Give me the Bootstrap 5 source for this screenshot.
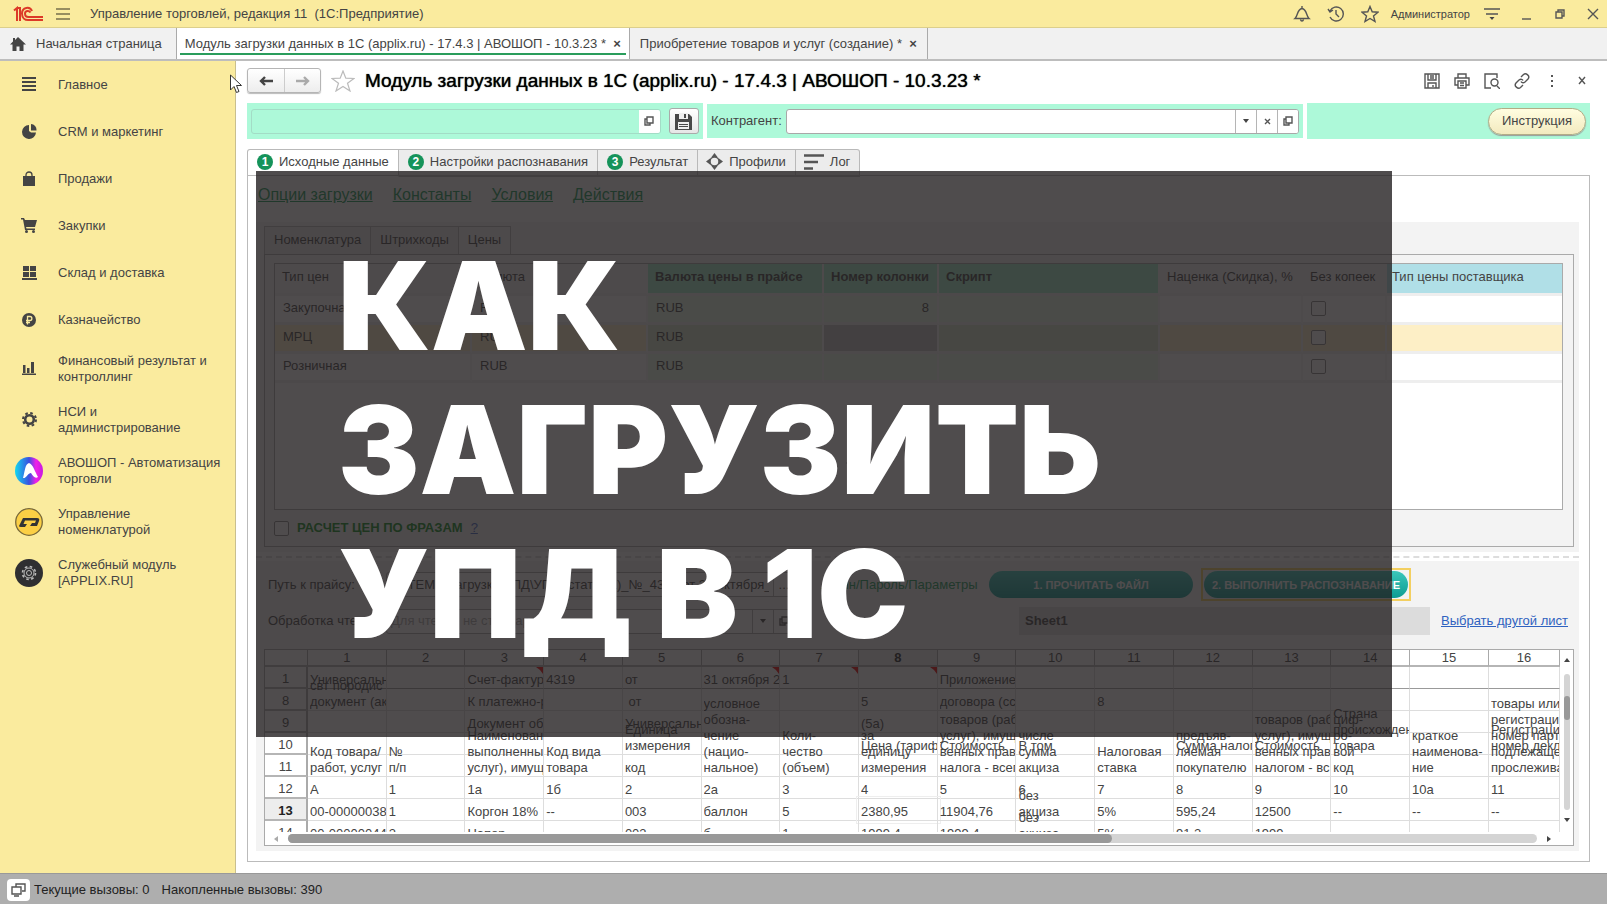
<!DOCTYPE html>
<html lang="ru">
<head>
<meta charset="utf-8">
<meta name="viewport" content="width=device-width, initial-scale=1">
<title>Управление торговлей</title>
<link href="https://cdn.jsdelivr.net/npm/bootstrap@5.3.0/dist/css/bootstrap.min.css" rel="stylesheet">
<style>
body{font:13px/16px "Liberation Sans",Arial,sans-serif;color:#444;background:#fff}
svg{display:block;flex:none}
button,input{font:inherit;color:inherit}
.ico{fill:none;stroke:#555;stroke-width:1.4}
.plain{border:0;background:none;padding:0}
.topbar{height:28px;background:#faeb9e;border-bottom:1px solid #dccf8c;padding-left:13px}
.user{font-size:11px}
.wintabs{height:33px;background:#f1f1f1;border-bottom:2px solid #bdbdbd}
.wintab{padding:0 10px;border-right:1px solid #aaa;color:#444;text-decoration:none}
.wintab.home{padding:0 14px 0 10px}
.wintab.current{background:#fff;padding:0 3px}
.wintab.current>span{border-bottom:2px solid #2a9d5c;padding:7px 5px 0;height:26px}
.side{width:236px;flex:none;background:#faeb9e;border-right:1px solid #c9bf8e}
.side a{display:flex;align-items:center;height:47px;color:#444;text-decoration:none}
.side a.two{height:51px}
.side a span{width:58px;flex:none;display:flex;justify-content:center}
.side svg{fill:#444}
.work{padding:0 17px 11px 11px;min-width:0}
.headline{padding-top:3px;margin-bottom:6px}
.navpair{height:25px;border:1px solid #b5b5b5;border-radius:3px;background:linear-gradient(#fff,#ededed);box-shadow:0 1px 1px #bbb}
.navpair button{width:36px;display:flex;align-items:center;justify-content:center}
.navpair button+button{border-left:1px solid #ccc}
.favstar{margin:0 10px}
.ttl{font-size:19px;line-height:24px;color:#000;margin:0;font-weight:400;text-shadow:0 0 1px #000}
.mint{background:#adf9d9;height:36px}
.mint.mid{height:34px}
.fld{border:1px solid #a8a8a8;border-radius:3px;background:#fff;height:25px;overflow:hidden}
.fld input{border:0;background:transparent;min-width:0;outline:0;padding:0 4px}
.fld input::placeholder{color:#aaa}
.fld button{width:21px;border:0;border-left:1px solid #b5b5b5;background:#fff;display:flex;align-items:center;justify-content:center;padding:0}
.fld.ghost{background:#adf9d9;border-color:#a3dcc6}
.savebtn{width:30px;height:26px;border:1px solid #aaa;border-radius:3px;background:linear-gradient(#fff,#e6e6e6);padding:0;display:flex;align-items:center;justify-content:center}
.help{height:27px;width:98px;border:1px solid #b3ac86;border-radius:14px;background:linear-gradient(#fffde0,#f3eabf);box-shadow:0 1px 1px #999;padding:0}
.steps{height:32px;padding-top:4px;margin:6px 0 -1px}
.steps button{height:28px;border:1px solid #b9b9b9;border-left-width:0;background:#ececec;padding:0 9px 3px;display:flex;align-items:center;gap:6px}
.steps button:first-child{border-left-width:1px;background:#fff;border-bottom-color:#fff;border-top-left-radius:3px}
.steps button:last-child{border-top-right-radius:3px}
.num{width:16px;height:16px;border-radius:8px;background:#15935a;color:#fff;font-weight:700;font-size:12px;line-height:16px;text-align:center}
.panel{border:1px solid #bbb;margin-top:-1px;padding:0 10px 10px 8px}
.opts{height:46px;padding:0 0 8px 2px;font-size:16px;gap:20px}
.opts a{color:#159a55}
.grp{background:#f3f3f3}
.subtabs button{height:28px;border:1px solid #bbb;border-left-width:0;border-bottom:0;background:#ececec;padding:0 9px 2px}
.subtabs button:first-child{border-left-width:1px}
.subtabs button:last-child{background:#f3f3f3;height:29px;margin-bottom:-1px}
.box{border:1px solid #aaa}
.prices{width:100%;table-layout:fixed;border-collapse:separate;border-spacing:0}
.prices th,.prices td{height:29px;padding:0 8px 2px;border-bottom:3px solid #eee;border-right:2px solid #f6f6f6;font-weight:400;white-space:nowrap}
.prices th{background:#f3f3f3;height:32px;padding:0 6px 3px 7px}
.prices th.g{background:#a5efcb;font-weight:700}
.prices td.g{background:#e4f8e6}
.prices tr.hot td{background:#fdefc6}
.prices tr.hot td.g{background:#d8e6ca}
.prices tr.hot td.cur{background:#c4c4c4}
.prices th.b{background:#b0dfe7;padding-left:5px}
.prices th:last-child,.prices td:last-child{border-right:0}
input[type=checkbox]{width:15px;height:15px;margin:0;appearance:none;border:1px solid #888;border-radius:2px;background:#fff;display:block}
.tealbtn{height:27px;border:0;border-radius:14px;background:linear-gradient(#3cc7bb,#0d9c92);color:#fff;font-weight:700;font-size:11px;width:204px;padding:0;white-space:nowrap}
.focusbox{border:2px solid #f3cf60;padding:1px}
.dash{border-top:2px dashed #ddd;margin:4px 0 3px}
.sheetname{background:#dcdcdc;height:28px;width:411px;padding:6px;font-weight:700}
.grid{table-layout:fixed;width:100%;border-collapse:separate;border-spacing:0}
.grid th{font-weight:400;text-align:center;border-right:1px solid #aaa;border-bottom:2px solid #b5b5b5;height:17px;padding:1px 0 0;line-height:14px}
.grid tbody th{height:22px;border-right:2px solid #aaa;padding-top:3px}
.grid td{position:relative;height:22px;border-right:1px solid #ddd;border-bottom:1px solid #ddd;padding:0}
.grid tr:first-child td{border-bottom:1px solid #999}
.grid td div{position:absolute;bottom:0;left:2px;right:0;white-space:pre;overflow-x:clip}
.grid .flag::after{content:"";position:absolute;top:0;right:0;border:4px solid transparent;border-top:3px solid #e00;border-right:3px solid #e00}
.grid .sel{outline:1px solid #eee;outline-offset:2px}
.grid .act{font-weight:700;background:#ededed;color:#222}
.clipbox{height:182px;overflow:hidden}
.vbar{width:15px;padding:8px 3px 10px 4px}
.track{background:#d4d4d4;border-radius:5px}
.thumb{background:#999;border-radius:5px}
.cover{position:absolute;left:8px;top:-5px;right:197px;height:566px;background:rgba(35,31,32,.8);z-index:5}
.cover h1{font:900 122px/144px Inter,sans-serif;color:#fff;margin:0;padding:63px 0 0 82px;white-space:nowrap}
.status{height:31px;background:#aeaeae;border-top:1px solid #999;color:#222;padding:2px 0 0 7px}
.mouse{position:absolute;left:230px;top:74px;z-index:6}
</style>
</head>
<body class="d-flex flex-column min-vh-100 position-relative">
<header class="topbar d-flex align-items-center">
  <svg width="30" height="16" viewBox="0 0 30 16" fill="none" stroke="#dc3a28" stroke-width="2"><path d="M1 4.500L4 2V15M4 2H7V15M19 5C17 0 9 1 9 7.500C9 12 12 14 15 14H30M17.500 6.500C16 4 12 4.500 12 7.500C12 10 13.500 11 15.500 11H30"/></svg>
  <button class="plain" style="margin-left:13px" aria-label="Меню"><svg width="14" height="14" viewBox="0 0 14 14" stroke="#77704c" stroke-width="1.600"><path d="M0 2H14M0 7H14M0 12H14"/></svg></button>
  <span class="ms-3 ps-1">Управление торговлей, редакция 11 &nbsp;(1С:Предприятие)</span>
  <div class="d-flex align-items-center ms-auto pe-2">
    <svg class="ico me-3" width="18" height="18" viewBox="0 0 18 18"><path d="M2 13.500H16C13 11 14 4 9 3.500C4 4 5 11 2 13.500ZM7.500 14.500C8 16.500 10 16.500 10.500 14.500M9 1V3"/></svg>
    <svg class="ico me-3" width="18" height="18" viewBox="0 0 18 18"><path d="M3 6A7 7 0 1 1 3 12M1 4L3 7L6 5M9 5V9L12 12"/></svg>
    <svg class="ico me-2" width="18" height="18" viewBox="0 0 18 18"><path d="M9 1.500L11.200 6.800L17 7.200L12.500 11L14 16.500L9 13.500L4 16.500L5.500 11L1 7.200L6.800 6.800Z"/></svg>
    <span class="ms-1 user">Администратор</span>
    <svg class="ico" style="margin-left:14px" width="16" height="14" viewBox="0 0 16 14"><path d="M0 2H16M2 7H14"/><path d="M5.500 10H10.500L8 13Z" fill="#444" stroke="none"/></svg>
    <svg class="ico" style="margin-left:21px" width="12" height="12" viewBox="0 0 12 12"><path d="M1 11H10"/></svg>
    <svg class="ico" style="margin-left:22px" width="10" height="10" viewBox="0 0 10 10"><path d="M1 3H7V9H1ZM3 3V1H9V7H7"/></svg>
    <svg class="ico" style="margin-left:22px" width="12" height="12" viewBox="0 0 12 12"><path d="M1 1L11 11M11 1L1 11"/></svg>
  </div>
</header>
<nav class="wintabs d-flex">
  <a class="wintab home d-flex align-items-center" href="#"><svg width="16" height="14" viewBox="0 0 16 14" fill="#444"><path d="M8 0L16 7.500H13.500V14H9.500V9.500H6.500V14H2.500V7.500H0L3 4.500V1H5V3Z"/></svg><span style="margin-left:10px">Начальная страница</span></a>
  <a class="wintab current d-flex align-items-end pb-1" href="#"><span>Модуль загрузки данных в 1С (applix.ru) - 17.4.3 | АВОШОП - 10.3.23 * &nbsp;<b>×</b></span></a>
  <a class="wintab d-flex align-items-center" href="#"><span>Приобретение товаров и услуг (создание) * &nbsp;<b>×</b></span></a>
</nav>
<div class="d-flex flex-grow-1">
  <nav class="side">
    <a href="#"><span><svg width="14" height="15" viewBox="0 0 14 15"><path d="M0 0H14V2H0ZM0 4H14V6H0ZM0 8H14V10H0ZM0 12H14V14H0Z"/></svg></span>Главное</a>
    <a href="#"><span><svg width="15" height="15" viewBox="0 0 15 15"><path d="M7 1A7 7 0 1 0 14 8.500H9L7 7Z"/><path d="M9 0V6.500H14.500A6 6 0 0 0 9 0Z"/></svg></span>CRM и маркетинг</a>
    <a href="#"><span><svg width="14" height="15" viewBox="0 0 14 15"><path d="M1 5H13V15H1Z"/><path d="M4 8V4C4 0 10 0 10 4V8" fill="none" stroke="#444" stroke-width="1.300"/></svg></span>Продажи</a>
    <a href="#"><span><svg width="16" height="15" viewBox="0 0 16 15"><path d="M0 0H3L4 2H16L14 9H5L5.500 10.500H14V12H4L2 1.500H0Z"/><circle cx="5.500" cy="13.500" r="1.500"/><circle cx="12.500" cy="13.500" r="1.500"/></svg></span>Закупки</a>
    <a href="#"><span><svg width="15" height="14" viewBox="0 0 15 14"><path d="M1 0H7V5H1ZM8 0H14V5H8ZM1 6H7V11H1ZM8 6H14V11H8ZM0 12H15V14H0Z"/></svg></span>Склад и доставка</a>
    <a href="#"><span><svg width="14" height="14" viewBox="0 0 14 14"><circle cx="7" cy="7" r="7"/><path d="M5.500 11.500V3.500H8C10.500 3.500 10.500 7.500 8 7.500H4M4 9.500H8" fill="none" stroke="#faeb9e" stroke-width="1.300"/></svg></span>Казначейство</a>
    <a href="#" class="two"><span><svg width="14" height="13" viewBox="0 0 14 13"><path d="M1 3H3.500V11H1ZM5 6H7.500V11H5ZM9 0H12V11H9ZM0 11.500H14V13H0Z"/></svg></span>Финансовый результат и<br>контроллинг</a>
    <a href="#" class="two"><span><svg width="15" height="15" viewBox="0 0 15 15"><circle cx="7.500" cy="7.500" r="4.300" fill="none" stroke="#444" stroke-width="2.600"/><circle cx="7.500" cy="7.500" r="6.500" fill="none" stroke="#444" stroke-width="2" stroke-dasharray="2.600 2.500"/></svg></span>НСИ и<br>администрирование</a>
    <a href="#" class="two"><span><svg width="28" height="28" viewBox="0 0 28 28"><defs><linearGradient id="av"><stop offset="0" stop-color="#12d8f0"/><stop offset=".5" stop-color="#3a50e0"/><stop offset=".75" stop-color="#f020e8"/><stop offset="1" stop-color="#c818e0"/></linearGradient></defs><circle cx="14" cy="14" r="14" fill="url(#av)"/><path d="M8 21C10 14 10 7 14 6C18 7 20 15 23 20C20 22 18 19 16 16C13 16 11 22 8 21Z" fill="#fff"/></svg></span>АВОШОП - Автоматизация<br>торговли</a>
    <a href="#" class="two"><span><svg width="28" height="28" viewBox="0 0 28 28"><circle cx="14" cy="14" r="13.300" fill="#fbcf45" stroke="#77683a" stroke-width="1.300"/><path d="M4 18L8 10H22Q25 10 24 13L22 18H15L17 15H20L21 12.500H10L8.500 16H12L10 19H6Q4 19 4 18Z" fill="#333"/></svg></span>Управление<br>номенклатурой</a>
    <a href="#" class="two"><span><svg width="28" height="28" viewBox="0 0 28 28"><circle cx="14" cy="14" r="14" fill="#2f2f31"/><g fill="none" stroke="#bbb"><circle cx="14" cy="14" r="5"/><circle cx="14" cy="14" r="2.500"/><circle cx="14" cy="14" r="6.500" stroke-width="1.600" stroke-dasharray="2.600 2.500"/></g></svg></span>Служебный модуль<br>[APPLIX.RU]</a>
  </nav>
  <main class="work flex-grow-1 d-flex flex-column">
    <div class="headline d-flex align-items-center">
      <div class="navpair d-flex my-1">
        <button class="plain" aria-label="Назад"><svg width="14" height="10" viewBox="0 0 14 10" fill="none" stroke="#444" stroke-width="2.400"><path d="M14 5H2M6 1L2 5L6 9"/></svg></button>
        <button class="plain" aria-label="Вперед"><svg width="14" height="10" viewBox="0 0 14 10" fill="none" stroke="#aaa" stroke-width="2.400"><path d="M0 5H12M8 1L12 5L8 9"/></svg></button>
      </div>
      <svg class="favstar" width="24" height="22" viewBox="0 0 24 22" fill="none" stroke="#bbb" stroke-width="1.200"><path d="M12 1L14.800 8.200L23 8.500L16.500 13.200L19 21L12 16.500L5 21L7.500 13.200L1 8.500L9.200 8.200Z"/></svg>
      <h2 class="ttl">Модуль загрузки данных в 1С (applix.ru) - 17.4.3 | АВОШОП - 10.3.23 *</h2>
      <div class="d-flex align-items-center ms-auto" style="gap:14px">
        <svg class="ico" width="16" height="16" viewBox="0 0 16 16"><path d="M1 1H15V15H1ZM4 1V7H12V1M4 15V10H12V15M6 3H10M6 5H10M9 12V14"/></svg>
        <svg class="ico" width="16" height="16" viewBox="0 0 16 16"><path d="M4 5V1H12V5M4 12H1V5H15V12H12M4 8H12V15H4ZM6 10H10M6 12.500H10"/></svg>
        <svg class="ico" width="16" height="16" viewBox="0 0 16 16"><path d="M7 15H1V1H13V5M13 13L16 16"/><circle cx="10.500" cy="9.500" r="3.500"/></svg>
        <svg class="ico" width="16" height="16" viewBox="0 0 16 16"><path d="M7 4L9.500 1.500C12 -.5 16.500 3 14 6L11 9C9 10.500 7.500 9.500 7 8.500M9 12L6.500 14.500C4 16.500 -.5 13 2 10L5 7C7 5.500 8.500 6.500 9 7.500"/></svg>
        <svg width="16" height="14" viewBox="0 0 16 14" fill="#555"><path d="M7 1H9V3H7ZM7 6H9V8H7ZM7 11H9V13H7Z"/></svg>
        <svg class="ico" style="margin:0 3px" width="10" height="10" viewBox="0 0 10 10"><path d="M2 1L8 8M8 1L2 8"/></svg>
      </div>
    </div>
    <div class="d-flex align-items-center gap-1">
      <div class="mint d-flex align-items-center ps-1 pe-1" style="flex:450 1 0">
        <div class="fld ghost d-flex flex-grow-1"><input class="flex-grow-1" aria-label="Настройка"><button style="border:0" aria-label="Открыть"><svg class="ico" width="10" height="10" viewBox="0 0 10 10"><path d="M3 3H1V9H6V7M3 1H9V7H3Z"/></svg></button></div>
        <button class="savebtn ms-2" aria-label="Сохранить"><svg width="17" height="17" viewBox="0 0 17 17"><path d="M0 1H14L17 4V17H0Z" fill="#484848"/><path d="M4 0H13V6H4ZM3 9H14V16H3Z" fill="#eee"/><path d="M9 1H11V5H9ZM4 11H13V12H4ZM4 13H13V14H4Z" fill="#484848"/></svg></button>
      </div>
      <div class="mint mid d-flex align-items-center px-1" style="flex:591 1 0">
        <label for="kon" class="me-1">Контрагент:</label>
        <div class="fld d-flex flex-grow-1"><input id="kon" class="flex-grow-1"><button aria-label="Список"><svg width="6" height="4" viewBox="0 0 6 4" fill="#444"><path d="M0 0H6L3 4Z"/></svg></button><button aria-label="Очистить"><svg class="ico" width="7" height="7" viewBox="0 0 7 7"><path d="M1 1L6 6M6 1L1 6"/></svg></button><button aria-label="Открыть"><svg class="ico" width="10" height="10" viewBox="0 0 10 10"><path d="M3 3H1V9H6V7M3 1H9V7H3Z"/></svg></button></div>
      </div>
      <div class="mint d-flex align-items-center justify-content-end pe-1" style="flex:280 1 0"><button class="help">Инструкция</button></div>
    </div>
    <div class="steps d-flex">
      <button><span class="num">1</span>Исходные данные</button>
      <button><span class="num">2</span>Настройки распознавания</button>
      <button><span class="num">3</span>Результат</button>
      <button style="padding-left:8px"><svg width="17" height="17" viewBox="0 0 17 17"><circle cx="8.500" cy="8.500" r="4.500" fill="none" stroke="#555" stroke-width="1.500"/><path d="M8.500 0L11.500 4H5.500ZM8.500 17L5.500 13H11.500ZM0 8.500L4 5.500V11.500ZM17 8.500L13 11.500V5.500Z" fill="#555"/></svg>Профили</button>
      <button style="padding-left:8px"><svg width="20" height="16" viewBox="0 0 20 16" stroke="#555" stroke-width="2.400"><path d="M0 1.500H20M0 8H14M0 14.500H9"/></svg>Лог</button>
    </div>
    <section class="panel flex-grow-1 d-flex flex-column position-relative">
      <div class="opts d-flex align-items-center"><a href="#">Опции загрузки</a><a href="#">Константы</a><a href="#">Условия</a><a href="#">Действия</a></div>
      <div class="grp flex-grow-1 d-flex flex-column" style="padding:4px 5px 5px 8px">
        <div class="subtabs d-flex"><button>Номенклатура</button><button>Штрихкоды</button><button>Цены</button></div>
        <div class="box flex-grow-1 d-flex flex-column" style="padding:8px 10px 0 9px">
          <div class="box bg-white flex-grow-1 p-0">
            <table class="prices">
              <colgroup><col style="width:197px"><col style="width:176px"><col style="width:176px"><col style="width:115px"><col style="width:221px"><col style="width:143px"><col style="width:84px"><col></colgroup>
              <thead><tr><th>Тип цен</th><th>Валюта</th><th class="g">Валюта цены в прайсе</th><th class="g">Номер колонки</th><th class="g">Скрипт</th><th>Наценка (Скидка), %</th><th>Без копеек</th><th class="b">Тип цены поставщика</th></tr></thead>
              <tbody>
                <tr><td>Закупочная</td><td>RUB</td><td class="g">RUB</td><td class="g text-end">8</td><td class="g"></td><td></td><td><input type="checkbox" aria-label="Без копеек"></td><td></td></tr>
                <tr class="hot"><td>МРЦ</td><td>RUB</td><td class="g">RUB</td><td class="g cur"></td><td class="g"></td><td></td><td><input type="checkbox" aria-label="Без копеек"></td><td></td></tr>
                <tr><td>Розничная</td><td>RUB</td><td class="g">RUB</td><td class="g"></td><td class="g"></td><td></td><td><input type="checkbox" aria-label="Без копеек"></td><td></td></tr>
              </tbody>
            </table>
          </div>
          <div class="d-flex align-items-center" style="height:36px"><input type="checkbox" id="phr"><label for="phr" class="fw-bold ms-2" style="color:#0a8a1c">РАСЧЕТ ЦЕН ПО ФРАЗАМ</label><a href="#" class="ms-2" style="color:#4468c8">?</a></div>
        </div>
      </div>
      <div class="dash"></div>
      <div class="grp" style="padding:7px 5px 5px 8px">
        <div class="d-flex align-items-center">
          <label for="pth" class="ms-1" style="width:118px">Путь к прайсу:</label>
          <div class="fld d-flex" style="width:409px"><input id="pth" class="flex-grow-1" value="D:\TEMP\Загрузка УПД\УПД (статус 1)_№_4319 от 31 октября_"><button>...</button></div>
          <a href="#" class="text-decoration-none" style="margin-left:26px;width:168px;color:#159a55">Логин/Пароль/Параметры</a>
          <button class="tealbtn">1. ПРОЧИТАТЬ ФАЙЛ</button>
          <div class="focusbox ms-2"><button class="tealbtn">2. ВЫПОЛНИТЬ РАСПОЗНАВАНИЕ</button></div>
        </div>
        <div class="d-flex align-items-center" style="margin:6px 0 14px">
          <label for="prc" class="ms-1 text-nowrap" style="width:118px">Обработка чтения:</label>
          <div class="fld d-flex" style="width:409px"><input id="prc" class="flex-grow-1" placeholder="Для чтения не стандартных"><button aria-label="Список"><svg width="6" height="4" viewBox="0 0 6 4" fill="#444"><path d="M0 0H6L3 4Z"/></svg></button><button aria-label="Открыть"><svg class="ico" width="10" height="10" viewBox="0 0 10 10"><path d="M3 3H1V9H6V7M3 1H9V7H3Z"/></svg></button></div>
          <a href="#" class="ms-1 text-decoration-none" style="color:#4468c8">?</a>
          <div class="sheetname ms-auto">Sheet1</div>
          <a href="#" class="ms-2 text-nowrap" style="color:#2f62c0;padding:0 6px 0 3px">Выбрать другой лист</a>
        </div>
        <div class="box bg-white">
          <div class="d-flex">
            <div class="clipbox flex-grow-1">
              <table class="grid"><colgroup><col style="width:43px"><col span="15"><col style="width:71px"></colgroup><thead><tr id="cols"></tr></thead><tbody id="cells"></tbody></table>
            </div>
            <div class="vbar d-flex flex-column align-items-center">
              <svg width="6" height="4" viewBox="0 0 6 4" fill="#444"><path d="M0 4H6L3 0Z"/></svg>
              <div class="track flex-grow-1 w-100" style="padding-top:22px;margin:12px 0 8px"><div class="thumb" style="height:24px"></div></div>
              <svg width="6" height="4" viewBox="0 0 6 4" fill="#444"><path d="M0 0H6L3 4Z"/></svg>
            </div>
          </div>
          <div class="d-flex align-items-center" style="height:13px;padding:0 22px 0 9px;gap:10px">
            <svg width="4" height="6" viewBox="0 0 4 6" fill="#aaa"><path d="M4 0V6L0 3Z"/></svg>
            <div class="track flex-grow-1"><div class="thumb" style="width:66%;height:9px"></div></div>
            <svg width="4" height="6" viewBox="0 0 4 6" fill="#444"><path d="M0 0V6L4 3Z"/></svg>
          </div>
        </div>
      </div>
      <div class="cover"><h1>КАК<br>ЗАГРУЗИТЬ<br>УПД В 1С</h1></div>
    </section>
  </main>
</div>
<footer class="status d-flex align-items-center">
  <button class="plain bg-white rounded-1 p-1" aria-label="Окна" style="height:22px"><svg class="ico" width="15" height="14" viewBox="0 0 15 14"><path d="M5 4V1H14V8H11M1 4H10V11H1ZM3 13H8"/></svg></button>
  <span class="ms-1">Текущие вызовы: 0</span><span class="ms-2 ps-1">Накопленные вызовы: 390</span>
</footer>
<svg class="mouse" width="12" height="20" viewBox="0 0 12 20" fill="#fff" stroke="#333"><path d="M.5 1V16L4 12.500L6.500 18.500L9 17.500L6.500 11.500H11.500Z"/></svg>
<script>
// Spreadsheet rows: number, then the text of each column; "\n" separates lines
const rows = [
  [1, "Универсальн", "", "Счет-фактур", "4319", "от", "31 октября 2", "1", "", "Приложение"],
  [8, "свт породис\nдокумент (ак", "", "К платежно-р", "", " от", "", "", "5", "договора (сс", "", "8"],
  [9, "", "", "Документ об", "", "Универсальн", "", "", "(5а)"],
  [10, "", "", "", "", "Единица\nизмерения", "", "", "Цена (тариф)", "Стоимость", "В том", "", "Сумма налога", "Стоимость", "Страна\nпроисхожден\nтовара", "", "Регистраци\nномер декла"],
  [11, "Код товара/\nработ, услуг", "№\nп/п", "Наименован\nвыполненны\nуслуг), имущ", "Код вида\nтовара", "код", "условное\nобозна-\nчение\n(нацио-\nнальное)", "Коли-\nчество\n(объем)", "за\nединицу\nизмерения", "товаров (раб\nуслуг), имущ\nвенных прав\nналога - всег", "числе\nсумма\nакциза", "Налоговая\nставка", "предъяв-\nляемая\nпокупателю", "товаров (раб\nуслуг), имущ\nвенных прав\nналогом - вс", "циф-\nро-\nвой\nкод", "краткое\nнаименова-\nние", "товары или\nрегистраци\nномер парт\nподлежаще\nпрослежива"],
  [12, "А", "1", "1а", "1б", "2", "2а", "3", "4", "5", "6", "7", "8", "9", "10", "10а", "11"],
  [13, "00-00000038", "1", "Коргон 18%", "--", "003", "баллон", "5", "2380,95", "11904,76", "без\nакциза", "5%", "595,24", "12500", "--", "--", "--"],
  [14, "00-00000044", "2", "Напор", "", "003", "б", "1", "1999,4", "1999,4", "без\nакциза", "5%", "91,2", "1999"]
];
let head = "<th></th>", body = "";
for (let c = 1; c < 17; c++) head += `<th class="${c == 8 ? "act" : ""}">${c}</th>`;
for (const r of rows) {
  body += `<tr><th class="${r[0] == 13 ? "act" : ""}">${r[0]}</th>`;
  for (let c = 1; c < 17; c++) {
    const cls = r[0] == 1 && [3, 6, 7, 8].includes(c) ? "flag" : r[0] == 13 && c == 8 ? "sel" : "";
    body += `<td class="${cls}"><div>${r[c] || ""}</div></td>`;
  }
  body += "</tr>";
}
document.getElementById("cols").innerHTML = head;
document.getElementById("cells").innerHTML = body;
</script>
<script src="https://cdn.jsdelivr.net/npm/bootstrap@5.3.0/dist/js/bootstrap.bundle.min.js"></script>
</body>
</html>
